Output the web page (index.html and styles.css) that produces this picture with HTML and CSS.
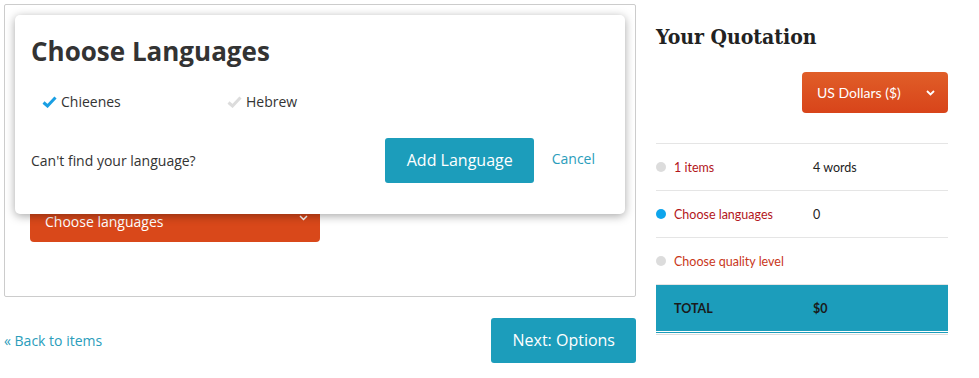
FILE: index.html
```html
<!DOCTYPE html>
<html>
<head>
    <title>Your Quotation</title>
    <link rel="stylesheet" href="styles.css">
</head>
<body>
    <div id="page">
        <div id="main">
            <div class="panel">
                <div class="select select-wide">
                    <span>Choose languages</span>
                    <svg class="chevron" width="9" height="6" viewBox="0 0 9 6"><path d="M1 1 L4.5 4.5 L8 1" fill="none" stroke="#fff" stroke-width="1.5"/></svg>
                </div>

                <div class="popup">
                    <h1>Choose Languages</h1>
                    <div class="langs">
                        <div class="lang">
                            <svg width="15" height="12" viewBox="0 0 15 12"><path d="M1.5 6.5 L5.5 10 L13.5 1.5" fill="none" stroke="#1a9fe3" stroke-width="3"/></svg>
                            <span>Chieenes</span>
                        </div>
                        <div class="lang">
                            <svg width="15" height="12" viewBox="0 0 15 12"><path d="M1.5 6.5 L5.5 10 L13.5 1.5" fill="none" stroke="#dcdcdc" stroke-width="3"/></svg>
                            <span>Hebrew</span>
                        </div>
                    </div>
                    <div class="popup-foot">
                        <span>Can't find your language?</span>
                        <div class="popup-actions">
                            <a class="btn" href="#">Add Language</a>
                            <a class="link" href="#">Cancel</a>
                        </div>
                    </div>
                </div>
            </div>

            <div class="nav">
                <a class="link" href="#">&laquo; Back to items</a>
                <a class="btn" href="#">Next: Options</a>
            </div>
        </div>

        <div id="side">
            <h2>Your Quotation</h2>
            <div class="currency">
                <div class="select select-small">
                    <span>US Dollars ($)</span>
                    <svg class="chevron" width="9" height="6" viewBox="0 0 9 6"><path d="M1 1 L4.5 4.5 L8 1" fill="none" stroke="#fff" stroke-width="1.8"/></svg>
                </div>
            </div>

            <div class="rows">
                <div class="row">
                    <span class="dot"></span>
                    <span class="label">1 items</span>
                    <span class="value">4 words</span>
                </div>
                <div class="row">
                    <span class="dot dot-active"></span>
                    <span class="label">Choose languages</span>
                    <span class="value">0</span>
                </div>
                <div class="row">
                    <span class="dot"></span>
                    <span class="label label-todo">Choose quality level</span>
                    <span class="value"></span>
                </div>
            </div>

            <div class="total">
                <span class="label">TOTAL</span>
                <span class="value">$0</span>
            </div>
            <div class="total-line"></div>
        </div>
    </div>
</body>
</html>
```

FILE: styles.css
```css
body {
    font-family: "Open Sans", Arial, sans-serif;
    background-color: #fff;
    color: #333;
    margin: 0;
    padding: 0;
}

a {
    text-decoration: none;
}

#page {
    display: flex;
    padding: 4px 0 0 4px;
}

#main {
    width: 632px;
}

.panel {
    position: relative;
    height: 293px;
    border: 1px solid #ccc;
    border-radius: 2px;
    padding: 196px 0 0 25px;
    box-sizing: border-box;
}

.select {
    display: flex;
    align-items: center;
    justify-content: space-between;
    box-sizing: border-box;
    color: #fff;
    font-size: 14px;
    border-radius: 4px;
    background: linear-gradient(#e05e28, #d8441a);
}

.select-wide {
    width: 290px;
    height: 41px;
    padding: 0 12px 0 15px;
    background: #d9481a;
}

.select-wide .chevron {
    margin-top: -8px;
}

.select-small {
    width: 146px;
    height: 41px;
    padding: 0 13px 0 15px;
}

.popup {
    position: absolute;
    top: 10px;
    left: 10px;
    width: 610px;
    height: 199px;
    box-sizing: border-box;
    padding: 18px 30px 0 16px;
    background-color: #fff;
    border-radius: 5px;
    box-shadow: 0 2px 10px rgba(0, 0, 0, 0.35);
}

.popup h1 {
    margin: 0;
    font-size: 26px;
    font-weight: bold;
    color: #333;
}

.langs {
    display: flex;
    margin-top: 23px;
    padding-left: 11px;
}

.lang {
    display: flex;
    align-items: center;
    width: 185px;
    font-size: 14px;
}

.lang svg {
    margin-right: 4px;
}

.popup-foot {
    display: flex;
    align-items: center;
    justify-content: space-between;
    margin-top: 27px;
    font-size: 14px;
}

.popup-actions {
    display: flex;
    align-items: center;
}

.popup-actions .btn {
    padding: 0 21px 0 22px;
}

.popup-actions .link {
    margin-left: 18px;
    margin-top: -4px;
}

.btn {
    display: inline-block;
    height: 45px;
    line-height: 45px;
    padding: 0 21px;
    background-color: #1c9dbb;
    color: #fff;
    font-size: 16px;
    border-radius: 3px;
}

.link {
    color: #2a9dbb;
    font-size: 14px;
}

.nav {
    display: flex;
    align-items: center;
    justify-content: space-between;
    margin-top: 21px;
}

#side {
    width: 292px;
    margin-left: 20px;
    font-family: Lato, "Open Sans", sans-serif;
    font-size: 12.5px;
}

#side h2 {
    margin: 19px 0 0 0;
    font-family: "DejaVu Serif", serif;
    font-stretch: condensed;
    font-size: 21px;
    font-weight: bold;
    color: #222;
    line-height: 28px;
}

.currency {
    display: flex;
    justify-content: flex-end;
    margin-top: 21px;
}

.rows {
    margin-top: 30px;
    border-top: 1px solid #e5e5e5;
}

.row {
    display: flex;
    align-items: center;
    height: 46px;
    border-bottom: 1px solid #e5e5e5;
}

.dot {
    width: 10px;
    height: 10px;
    border-radius: 50%;
    background-color: #dcdcdc;
    margin-right: 8px;
}

.dot-active {
    background-color: #0ea5ec;
}

.row .label {
    width: 139px;
    color: #b3161b;
}

.row .label-todo {
    color: #c9371a;
}

.row .value {
    color: #222;
}

.total {
    display: flex;
    align-items: center;
    height: 46px;
    padding-left: 18px;
    background-color: #1c9dbb;
    color: #1a1a1a;
    font-weight: bold;
    border-bottom: 1px solid #fff;
}

.total .label {
    width: 139px;
}

.total-line {
    height: 1px;
    padding-bottom: 1px;
    background-color: #1c9dbb;
    background-clip: content-box;
    border-bottom: 1px solid #ddd;
}
```
